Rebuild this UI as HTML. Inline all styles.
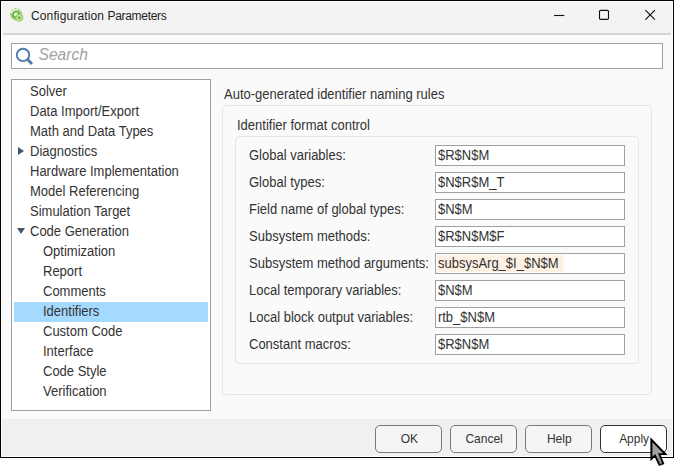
<!DOCTYPE html>
<html>
<head>
<meta charset="utf-8">
<title>Configuration Parameters</title>
<style>
html,body{margin:0;padding:0;background:#fff;}
body{width:674px;height:468px;overflow:hidden;position:relative;font-family:"Liberation Sans",Arial,sans-serif;font-size:13px;color:#333;}
#win{position:absolute;left:0;top:0;width:672px;height:456px;border:1px solid #000;background:#fafafa;}
#win-in{position:absolute;left:0;top:0;width:670px;height:454px;border:1px solid #fff;}
#title{position:absolute;left:2px;top:2px;width:670px;height:31px;background:#f3f3f3;}
#title .txt{position:absolute;left:29px;top:7px;font-size:12px;color:#1c1c1c;line-height:14px;white-space:nowrap;}
#tline{position:absolute;left:3px;top:33px;width:668px;height:2px;background:#d4d4d4;}
#search{position:absolute;left:11px;top:43px;width:650px;height:24px;border:1px solid #a0a0a0;background:#fff;}
#search .ph{position:absolute;left:26.5px;top:2px;font-size:15.6px;font-style:italic;color:#a2a2a2;line-height:18px;}
#tree{position:absolute;left:11px;top:79px;width:198px;height:330px;border:1px solid #a0a0a0;background:#fff;}
.ti{position:absolute;left:18px;margin-top:-1px;font-size:14px;transform:scaleX(0.9286);transform-origin:0 50%;height:20px;line-height:20px;white-space:nowrap;color:#333;}
.ti.c{left:31px;}
#sel{position:absolute;left:2px;top:222px;width:194px;height:20px;background:#a4daff;}
.arr{position:absolute;width:0;height:0;}
#hdr{font-size:14px;transform:scaleX(0.9286);transform-origin:0 50%;position:absolute;left:224px;top:86px;line-height:16px;white-space:nowrap;}
#g1{position:absolute;left:222px;top:105px;width:428px;height:288px;border:1px solid #e6e6e6;border-radius:4px;background:#fafafa;}
#g1t{font-size:14px;transform:scaleX(0.9286);transform-origin:0 50%;position:absolute;left:237px;top:117px;line-height:16px;white-space:nowrap;}
#g2{position:absolute;left:235px;top:136px;width:402px;height:226px;border:1px solid #e6e6e6;border-radius:4px;background:#fafafa;}
.lb{font-size:14px;transform:scaleX(0.9286);transform-origin:0 50%;position:absolute;left:249px;margin-top:-0.5px;line-height:16px;white-space:nowrap;}
.in{position:absolute;left:435px;width:188px;height:19px;border:1px solid #a0a0a0;background:#fff;}
.in span{font-size:14px;transform:scaleX(0.9286);transform-origin:0 50%;position:absolute;left:1px;top:1px;line-height:17px;height:17px;white-space:nowrap;padding:0 1px;}
.in span.hl{background:#fdf1e3;padding-right:5px;}
#bar{position:absolute;left:2px;top:419px;width:670px;height:37px;background:#f0f0f0;}
.btn{position:absolute;top:425px;width:65px;height:26px;border:1px solid #787878;border-radius:5px;background:#f5f5f5;text-align:center;line-height:26px;color:#333;}
.btn span{display:inline-block;margin-left:1px;font-size:12.9px;transform:scaleX(0.93);transform-origin:50% 50%;}
</style>
</head>
<body>
<div id="win"><div id="win-in"></div></div>
<div id="title">
<svg style="position:absolute;left:4px;top:2px" width="24" height="24" viewBox="0 -0.4 24 24">
<path d="M14.90 10.87 L15.54 11.61 L14.96 12.87 L13.99 12.88 L13.15 13.73 L13.17 14.71 L11.91 15.30 L11.16 14.68 L9.98 14.80 L9.36 15.55 L8.01 15.20 L7.84 14.25 L6.86 13.57 L5.90 13.75 L5.09 12.62 L5.57 11.78 L5.25 10.63 L4.41 10.15 L4.51 8.77 L5.43 8.43 L5.92 7.34 L5.58 6.43 L6.55 5.44 L7.46 5.77 L8.54 5.25 L8.86 4.34 L10.25 4.20 L10.74 5.04 L11.89 5.34 L12.73 4.84 L13.87 5.63 L13.71 6.59 L14.40 7.56 L15.36 7.71 L15.74 9.05 L15.00 9.68 Z" fill="#b1de86" stroke="#84c255" stroke-width="0.9" stroke-linejoin="round"/>
<circle cx="10" cy="10" r="3.100" fill="none" stroke="#5fa338" stroke-width="1.300"/>
<circle cx="10" cy="10.200" r="1.700" fill="#f6fbf0"/>
<path d="M5.600 9 A4.600 4.600 0 0 1 11.800 5.600" fill="none" stroke="#e2f4d0" stroke-width="1.500"/>
<path d="M16.48 13.62 L17.09 14.21 L16.63 15.33 L15.78 15.32 L15.04 15.99 L14.96 16.83 L13.78 17.17 L13.27 16.50 L12.28 16.33 L11.57 16.80 L10.58 16.09 L10.78 15.27 L10.29 14.39 L9.49 14.13 L9.42 12.91 L10.19 12.56 L10.57 11.63 L10.28 10.84 L11.18 10.02 L11.94 10.40 L12.90 10.12 L13.34 9.40 L14.54 9.60 L14.72 10.43 L15.53 11.01 L16.37 10.90 L16.97 11.97 L16.43 12.62 Z" fill="#bce392" stroke="#7dbd4d" stroke-width="0.700" stroke-linejoin="round"/>
<rect x="12.300" y="12.300" width="2" height="2" fill="#4f982e"/>
</svg>
<div class="txt"><span style="letter-spacing:0.13px">Configuration</span> <span style="letter-spacing:-0.3px">Parameters</span></div>
<svg style="position:absolute;left:539px;top:-1px" width="130" height="31" viewBox="0 0 130 31">
<g stroke="#111" stroke-width="1.1" fill="none">
<line x1="13" y1="14.5" x2="23.3" y2="14.5"/>
<rect x="58.5" y="9.4" width="9" height="9" rx="1.2"/>
<line x1="104.4" y1="9.2" x2="113.9" y2="18.700"/>
<line x1="113.9" y1="9.2" x2="104.4" y2="18.700"/>
</g>
</svg>
</div>
<div id="tline"></div>

<div id="search">
<svg style="position:absolute;left:3px;top:3px" width="20" height="20" viewBox="0 0 20 20">
<circle cx="8" cy="7.900" r="6.200" fill="none" stroke="#4f7dac" stroke-width="1.900"/>
<line x1="12.300" y1="12.300" x2="17" y2="17.100" stroke="#4f7dac" stroke-width="2.900"/>
</svg>
<div class="ph">Search</div>
</div>

<div id="tree">
<div id="sel"></div>
<div class="ti" style="top:2px">Solver</div>
<div class="ti" style="top:22px">Data Import/Export</div>
<div class="ti" style="top:42px">Math and Data Types</div>
<div class="ti" style="top:62px">Diagnostics</div>
<div class="ti" style="top:82px">Hardware Implementation</div>
<div class="ti" style="top:102px">Model Referencing</div>
<div class="ti" style="top:122px">Simulation Target</div>
<div class="ti" style="top:142px">Code Generation</div>
<div class="ti c" style="top:162px">Optimization</div>
<div class="ti c" style="top:182px">Report</div>
<div class="ti c" style="top:202px">Comments</div>
<div class="ti c" style="top:222px">Identifiers</div>
<div class="ti c" style="top:242px">Custom Code</div>
<div class="ti c" style="top:262px">Interface</div>
<div class="ti c" style="top:282px">Code Style</div>
<div class="ti c" style="top:302px">Verification</div>
<div class="arr" style="left:6px;top:67px;border-left:6px solid #44546a;border-top:4px solid transparent;border-bottom:4px solid transparent;"></div>
<div class="arr" style="left:5px;top:148px;border-top:6px solid #44546a;border-left:4px solid transparent;border-right:4px solid transparent;"></div>
</div>

<div id="hdr">Auto-generated identifier naming rules</div>
<div id="g1"></div>
<div id="g1t">Identifier format control</div>
<div id="g2"></div>

<div class="lb" style="top:147px">Global variables:</div>
<div class="lb" style="top:174px">Global types:</div>
<div class="lb" style="top:201px">Field name of global types:</div>
<div class="lb" style="top:228px">Subsystem methods:</div>
<div class="lb" style="top:255px">Subsystem method arguments:</div>
<div class="lb" style="top:282px">Local temporary variables:</div>
<div class="lb" style="top:309px">Local block output variables:</div>
<div class="lb" style="top:336px">Constant macros:</div>

<div class="in" style="top:145px"><span>$R$N$M</span></div>
<div class="in" style="top:172px"><span>$N$R$M_T</span></div>
<div class="in" style="top:199px"><span>$N$M</span></div>
<div class="in" style="top:226px"><span>$R$N$M$F</span></div>
<div class="in" style="top:253px"><span class="hl">subsysArg_$I_$N$M</span></div>
<div class="in" style="top:280px"><span>$N$M</span></div>
<div class="in" style="top:307px"><span>rtb_$N$M</span></div>
<div class="in" style="top:334px"><span>$R$N$M</span></div>

<div id="bar"></div>
<div class="btn" style="left:375px"><span>OK</span></div>
<div class="btn" style="left:450px"><span>Cancel</span></div>
<div class="btn" style="left:525px"><span>Help</span></div>
<div class="btn" style="left:600px;background:#fff;border-color:#333;"><span>Apply</span></div>

<svg style="position:absolute;left:640px;top:428px" width="34" height="40" viewBox="640 428 34 40">
<path d="M650.400 437.300 L650.400 461.300 L654.700 457 L658.900 466 L664.400 463.900 L660.700 455.100 L667.600 455.100 Z" fill="#000"/>
<path d="M652.400 442.200 L652.400 456.800 L655.300 454 L660.200 464 L662.100 463.200 L658 453.300 L663.200 453.300 Z" fill="#a0a0a0"/>
<path d="M657.200 457.500 L660.600 464.300 M658.800 456.800 L661.800 463.500" stroke="#6a6a6a" stroke-width="0.700" fill="none"/>
</svg>
</body>
</html>
